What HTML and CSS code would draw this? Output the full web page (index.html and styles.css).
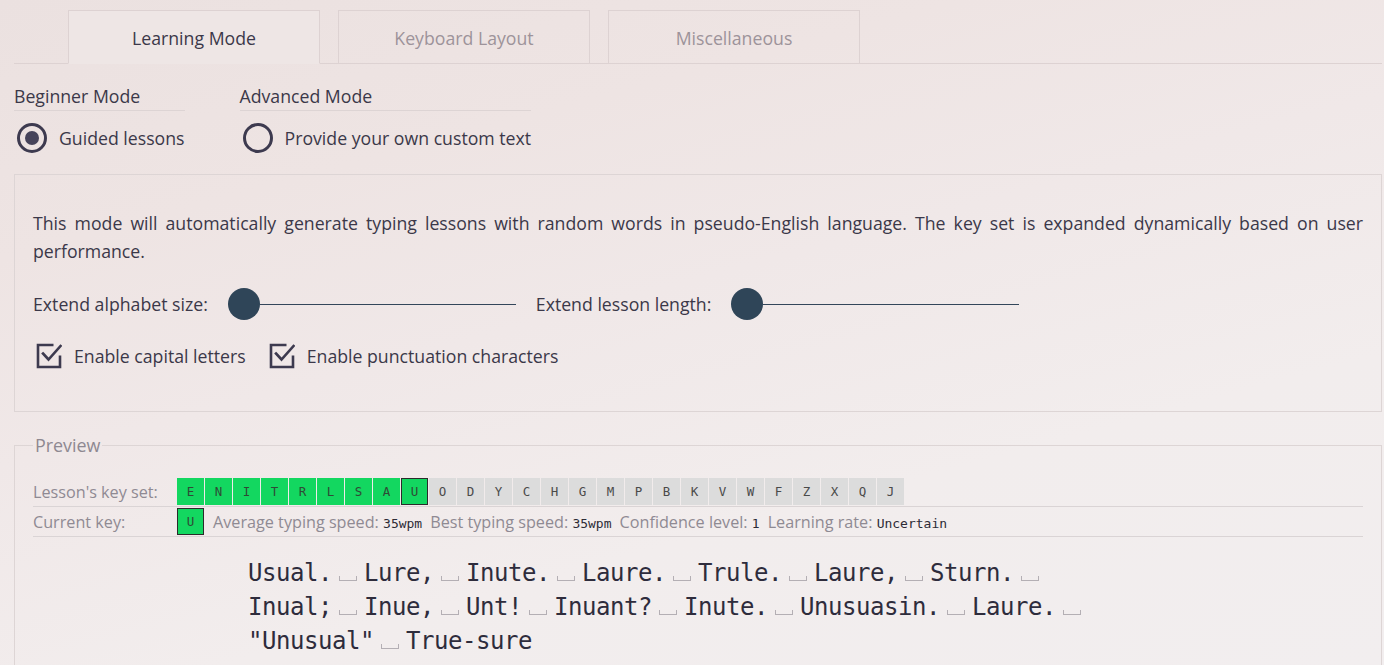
FILE: index.html
```html
<!DOCTYPE html>
<html lang="en">
<head>
<meta charset="utf-8">
<title>Learning Mode</title>
<link rel="stylesheet" href="styles.css">
</head>
<body>
<div class="page">
  <nav class="tabs">
    <div class="tab active">Learning Mode</div>
    <div class="tab">Keyboard Layout</div>
    <div class="tab">Miscellaneous</div>
  </nav>

  <div class="modes">
    <div class="mode">
      <div class="mode-title">Beginner Mode</div>
      <label class="radio"><span class="radio-ring on"></span>Guided lessons</label>
    </div>
    <div class="mode">
      <div class="mode-title">Advanced Mode</div>
      <label class="radio"><span class="radio-ring"></span>Provide your own custom text</label>
    </div>
  </div>

  <section class="panel">
    <p class="desc">This mode will automatically generate typing lessons with random words in pseudo-English language. The key set is expanded dynamically based on user performance.</p>
    <div class="sliders">
      <span class="slider-label">Extend alphabet size:</span>
      <div class="slider"><span class="thumb"></span><span class="track"></span></div>
      <span class="slider-label">Extend lesson length:</span>
      <div class="slider"><span class="thumb"></span><span class="track"></span></div>
    </div>
    <div class="checks">
      <label class="check">
        <svg class="check-icon" viewBox="0 0 26 26" width="26" height="26"><path d="M24 12.5V24H2V2h15.5" fill="none" stroke="#3d3a4f" stroke-width="2.6" stroke-linejoin="miter"/><path d="M7 10.5l5.5 6L24.5 3" fill="none" stroke="#3d3a4f" stroke-width="2.6" stroke-linecap="square" stroke-linejoin="miter"/></svg>
        Enable capital letters
      </label>
      <label class="check">
        <svg class="check-icon" viewBox="0 0 26 26" width="26" height="26"><path d="M24 12.5V24H2V2h15.5" fill="none" stroke="#3d3a4f" stroke-width="2.6" stroke-linejoin="miter"/><path d="M7 10.5l5.5 6L24.5 3" fill="none" stroke="#3d3a4f" stroke-width="2.6" stroke-linecap="square" stroke-linejoin="miter"/></svg>
        Enable punctuation characters
      </label>
    </div>
  </section>

  <fieldset class="preview">
    <legend>Preview</legend>
    <div class="row">
      <span class="row-label">Lesson's key set:</span>
      <div class="keys">
        <span class="key in">E</span><span class="key in">N</span><span class="key in">I</span><span class="key in">T</span><span class="key in">R</span><span class="key in">L</span><span class="key in">S</span><span class="key in">A</span><span class="key in cur">U</span><span class="key">O</span><span class="key">D</span><span class="key">Y</span><span class="key">C</span><span class="key">H</span><span class="key">G</span><span class="key">M</span><span class="key">P</span><span class="key">B</span><span class="key">K</span><span class="key">V</span><span class="key">W</span><span class="key">F</span><span class="key">Z</span><span class="key">X</span><span class="key">Q</span><span class="key">J</span>
      </div>
    </div>
    <div class="row">
      <span class="row-label">Current key:</span>
      <span class="key in cur">U</span>
      <span class="stat">Average typing speed: <code>35wpm</code></span>
      <span class="stat">Best typing speed: <code>35wpm</code></span>
      <span class="stat">Confidence level: <code>1</code></span>
      <span class="stat">Learning rate: <code>Uncertain</code></span>
    </div>
    <div class="lesson">
      <div class="line">Usual.<span class="sp"></span>Lure,<span class="sp"></span>Inute.<span class="sp"></span>Laure.<span class="sp"></span>Trule.<span class="sp"></span>Laure,<span class="sp"></span>Sturn.<span class="sp"></span></div>
      <div class="line">Inual;<span class="sp"></span>Inue,<span class="sp"></span>Unt!<span class="sp"></span>Inuant?<span class="sp"></span>Inute.<span class="sp"></span>Unusuasin.<span class="sp"></span>Laure.<span class="sp"></span></div>
      <div class="line">"Unusual"<span class="sp"></span>True-sure</div>
    </div>
  </fieldset>
</div>
</body>
</html>
```

FILE: styles.css
```css
* { box-sizing: border-box; }

html, body {
  margin: 0;
  height: 100%;
}

body {
  font-family: "Open Sans", "Liberation Sans", sans-serif;
  font-size: 17.7px;
  color: #3b3849;
  background: linear-gradient(165deg, #ebe1e0 0%, #eee4e3 25%, #f0e8e8 45%, #f2eded 70%, #f2eeef 100%);
  overflow: hidden;
}

.page {
  height: 665px;
  overflow: hidden;
  padding: 0 2px 0 14px;
}

/* Tabs */
.tabs {
  display: flex;
  gap: 18px;
  padding: 10px 0 0 54px;
  border-bottom: 1px solid #ddd2d2;
}

.tab {
  width: 252px;
  height: 54px;
  margin-bottom: -1px;
  border: 1px solid #ddd2d2;
  display: flex;
  align-items: center;
  justify-content: center;
  padding-top: 1px;
  color: #9d939a;
}

.tab.active {
  color: #3b3849;
  border-bottom-color: transparent;
  background: #eee6e5;
}

/* Modes */
.modes {
  display: flex;
  gap: 55px;
  padding-top: 20px;
}

.mode-title {
  line-height: 24px;
  padding-bottom: 2px;
  border-bottom: 1px solid #ddd4d4;
}

.radio {
  display: flex;
  align-items: center;
  gap: 12px;
  margin-top: 12px;
  padding-left: 3px;
}

.radio-ring {
  width: 30px;
  height: 30px;
  border-radius: 50%;
  border: 3px solid #3d3a4f;
  display: flex;
  align-items: center;
  justify-content: center;
}

.radio-ring.on::after {
  content: "";
  width: 14px;
  height: 14px;
  border-radius: 50%;
  background: #46435a;
}

/* Panel */
.panel {
  margin-top: 21px;
  border: 1px solid #ddd5d5;
  padding: 34px 18px 42px;
}

.desc {
  margin: 0;
  line-height: 28px;
  text-align: justify;
}

.sliders {
  display: flex;
  align-items: center;
  gap: 20px;
  height: 40px;
  margin-top: 19px;
}

.slider {
  width: 288px;
  display: flex;
  align-items: center;
}

.thumb {
  width: 32px;
  height: 32px;
  border-radius: 50%;
  background: #2f4558;
  flex: none;
}

.track {
  flex: 1;
  height: 1px;
  background: #33465a;
}

.checks {
  display: flex;
  gap: 23px;
  margin-top: 19px;
  padding-left: 3px;
}

.check {
  display: flex;
  align-items: center;
  gap: 12px;
}

.check-icon { display: block; }

/* Preview */
.preview {
  margin: 21px 0 0;
  border: 1px solid #ddd5d5;
  padding: 20px 18px 60px;
  min-width: 0;
}

.preview legend {
  padding: 0 2px;
  color: #8e8891;
  font-size: 17.9px;
}

.row {
  display: flex;
  align-items: center;
  border-bottom: 1px solid #dad4d5;
  padding: 1px 0;
  color: #8f8a93;
  font-size: 16.2px;
}

.row-label {
  width: 144px;
  flex: none;
}

.keys { display: flex; }

.key {
  width: 27px;
  height: 27px;
  margin-right: 1px;
  display: flex;
  align-items: center;
  justify-content: center;
  background: #dcdcdc;
  color: #4a4a4a;
  font-family: "DejaVu Sans Mono", monospace;
  font-size: 12.5px;
}

.key.in {
  background: #13d760;
  color: #2f4a36;
}

.key.cur {
  border: 1px solid #2b2b2b;
}

.stat {
  margin-left: 8px;
  white-space: nowrap;
}

.stat code {
  font-family: "DejaVu Sans Mono", monospace;
  font-size: 13px;
  color: #2d2b36;
}

.lesson {
  width: 900px;
  margin: 19px auto 0;
  font-family: "DejaVu Sans Mono", monospace;
  font-size: 24px;
  letter-spacing: -0.45px;
  line-height: 34px;
  color: #2e2c3c;
}

.line { white-space: nowrap; }

.sp {
  display: inline-block;
  width: 18px;
  height: 5px;
  margin: 0 7px;
  border: 1.5px solid #b4afb4;
  border-top: none;
}
```
